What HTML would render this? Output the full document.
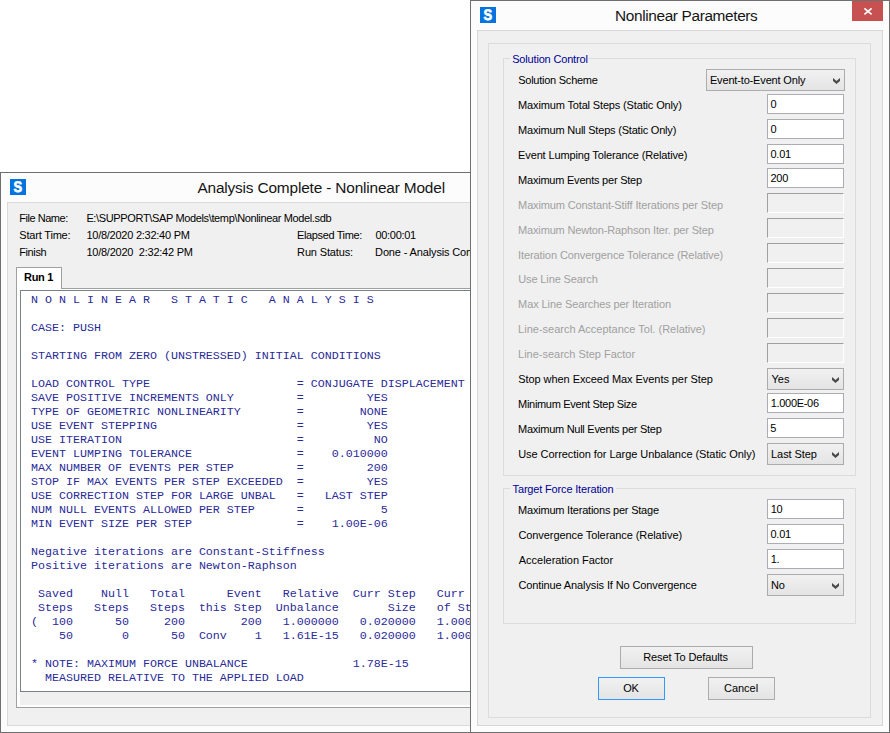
<!DOCTYPE html>
<html>
<head>
<meta charset="utf-8">
<title>Nonlinear Parameters</title>
<style>
html,body{margin:0;padding:0;}
body{width:890px;height:733px;overflow:hidden;background:#fff;position:relative;
  font-family:"Liberation Sans",sans-serif;font-size:11px;color:#000;}
.abs{position:absolute;}
.win{position:absolute;box-sizing:border-box;border:1px solid #6f6f6f;background:#fcfcfc;}
.icon{position:absolute;width:16px;height:16px;background:#0573e0;overflow:hidden;}
.t{position:absolute;white-space:pre;line-height:14px;height:14px;}
.title{font-size:15.4px;line-height:20px;height:20px;color:#151515;}
.dis{color:#a0a0a0;}
.leg{color:#000094;}
.inp{position:absolute;box-sizing:border-box;left:767px;width:77px;height:20px;border:1px solid #abadb3;background:#fff;}
.inpd{position:absolute;box-sizing:border-box;left:767px;width:77px;height:20px;border:1px solid;border-color:#a0a0a0 #fff #fff #a0a0a0;background:#f0f0f0;}
.sel{position:absolute;box-sizing:border-box;left:767px;width:77px;height:22px;border:1px solid #acacac;background:linear-gradient(#f1f1f1,#e4e4e4);}
.sel svg{position:absolute;right:4px;top:8px;}
.btn{position:absolute;box-sizing:border-box;height:23px;border:1px solid #acacac;background:linear-gradient(#f1f1f1,#e4e4e4);}
.grp{position:absolute;box-sizing:border-box;border:1px solid #dcdcdc;}
.gap{position:absolute;top:-1px;height:1px;background:#f0f0f0;}
.mono{position:absolute;margin:0;left:31px;top:293px;width:439px;overflow:hidden;font-family:"Liberation Mono","DejaVu Sans Mono",monospace;font-size:11.667px;line-height:14px;color:#2a2a98;white-space:pre;}
</style>
</head>
<body>

<!-- ================= LEFT WINDOW ================= -->
<div class="win" style="left:0;top:172px;width:500px;height:561px;">
  <div class="icon" style="left:9px;top:6px;"><svg width="16" height="16" style="position:absolute;left:0;top:0"><text x="0" y="0" text-rendering="geometricPrecision" transform="translate(7.8 13.2) scale(0.81 0.96)" text-anchor="middle" font-family="Liberation Sans,sans-serif" font-weight="bold" font-size="16" fill="#fff" stroke="#fff" stroke-width="0.7">S</text></svg></div>
  <div class="abs" style="left:6px;top:29px;width:500px;height:524px;background:#f0f0f0;box-sizing:border-box;border:1px solid #dadada;"></div>
</div>
<!-- tab page -->
<div class="abs" style="left:16px;top:288px;width:480px;height:420px;box-sizing:border-box;border:1px solid #a0a0a0;background:#fff;"></div>
<!-- tab -->
<div class="abs" style="left:16px;top:267px;width:46px;height:22px;box-sizing:border-box;border:1px solid #a0a0a0;border-bottom:none;background:#fff;"></div>
<!-- grey strip under textbox -->
<div class="abs" style="left:20px;top:692px;width:480px;height:13px;background:#f0f0f0;"></div>
<!-- text box -->
<div class="abs" style="left:20px;top:290px;width:480px;height:402px;box-sizing:border-box;border:1px solid #7a7f8c;background:#fff;"></div>
<pre class="mono">N O N L I N E A R   S T A T I C   A N A L Y S I S

CASE: PUSH

STARTING FROM ZERO (UNSTRESSED) INITIAL CONDITIONS

LOAD CONTROL TYPE                     = CONJUGATE DISPLACEMENT
SAVE POSITIVE INCREMENTS ONLY         =         YES
TYPE OF GEOMETRIC NONLINEARITY        =        NONE
USE EVENT STEPPING                    =         YES
USE ITERATION                         =          NO
EVENT LUMPING TOLERANCE               =    0.010000
MAX NUMBER OF EVENTS PER STEP         =         200
STOP IF MAX EVENTS PER STEP EXCEEDED  =         YES
USE CORRECTION STEP FOR LARGE UNBAL   =   LAST STEP
NUM NULL EVENTS ALLOWED PER STEP      =           5
MIN EVENT SIZE PER STEP               =    1.00E-06

Negative iterations are Constant-Stiffness
Positive iterations are Newton-Raphson

 Saved    Null   Total      Event   Relative  Curr Step   Curr Sum
 Steps   Steps   Steps  this Step  Unbalance       Size   of Steps
(  100      50     200        200   1.000000   0.020000   1.000000
    50       0      50  Conv    1   1.61E-15   0.020000   1.000000

* NOTE: MAXIMUM FORCE UNBALANCE               1.78E-15
  MEASURED RELATIVE TO THE APPLIED LOAD</pre>

<!-- ================= RIGHT DIALOG ================= -->
<div class="win" style="left:470px;top:0;width:420px;height:733px;">
  <div class="icon" style="left:9px;top:6px;"><svg width="16" height="16" style="position:absolute;left:0;top:0"><text x="0" y="0" text-rendering="geometricPrecision" transform="translate(7.8 13.2) scale(0.81 0.96)" text-anchor="middle" font-family="Liberation Sans,sans-serif" font-weight="bold" font-size="16" fill="#fff" stroke="#fff" stroke-width="0.7">S</text></svg></div>
  <div class="abs" style="left:381px;top:0;width:31px;height:20px;background:#c75050;">
    <svg width="31" height="20" style="position:absolute;left:0;top:0"><path d="M12.4 7.4 L19.6 13.4 M19.6 7.4 L12.4 13.4" stroke="#fff" stroke-width="1.7" fill="none"/></svg>
  </div>
  <div class="abs" style="left:6px;top:29px;width:406px;height:696px;background:#f0f0f0;box-sizing:border-box;border:1px solid #d6d6d6;"></div>
  <div class="abs" style="left:17px;top:42px;width:383px;height:675px;box-sizing:border-box;border:1px solid #dcdcdc;"></div>
</div>

<div class="grp" style="left:503px;top:58px;width:353px;height:418px;"><div class="gap" style="left:6px;width:79px;"></div></div>
<div class="grp" style="left:503px;top:488px;width:353px;height:136px;"><div class="gap" style="left:6px;width:106px;"></div></div>

<div class="sel" style="left:706px;top:69px;width:139px;"><svg width="7" height="6"><polygon points="0,0 3.5,3 7,0 7,3 3.5,6 0,3" fill="#4a4a4a"/></svg></div>
<div class="inp" style="top:94px;"></div>
<div class="inp" style="top:119px;"></div>
<div class="inp" style="top:144px;"></div>
<div class="inp" style="top:168px;"></div>
<div class="inpd" style="top:193px;"></div>
<div class="inpd" style="top:218px;"></div>
<div class="inpd" style="top:243px;"></div>
<div class="inpd" style="top:268px;"></div>
<div class="inpd" style="top:293px;"></div>
<div class="inpd" style="top:318px;"></div>
<div class="inpd" style="top:343px;"></div>
<div class="sel" style="top:368px;"><svg width="7" height="6"><polygon points="0,0 3.5,3 7,0 7,3 3.5,6 0,3" fill="#4a4a4a"/></svg></div>
<div class="inp" style="top:393px;"></div>
<div class="inp" style="top:418px;"></div>
<div class="sel" style="top:443px;"><svg width="7" height="6"><polygon points="0,0 3.5,3 7,0 7,3 3.5,6 0,3" fill="#4a4a4a"/></svg></div>
<div class="inp" style="top:499px;"></div>
<div class="inp" style="top:524px;"></div>
<div class="inp" style="top:549px;"></div>
<div class="sel" style="top:574px;"><svg width="7" height="6"><polygon points="0,0 3.5,3 7,0 7,3 3.5,6 0,3" fill="#4a4a4a"/></svg></div>

<div class="btn" style="left:620px;top:646px;width:133px;"></div>
<div class="btn" style="left:598px;top:677px;width:67px;border-color:#3399ff;"></div>
<div class="btn" style="left:708px;top:677px;width:67px;"></div>

<div class="t" style="left:518.2px;top:73px;letter-spacing:-0.246px;">Solution Scheme</div>
<div class="t" style="left:518.1px;top:98px;letter-spacing:-0.150px;">Maximum Total Steps (Static Only)</div>
<div class="t" style="left:518.1px;top:123px;letter-spacing:-0.200px;">Maximum Null Steps (Static Only)</div>
<div class="t" style="left:518.1px;top:148px;letter-spacing:-0.141px;">Event Lumping Tolerance (Relative)</div>
<div class="t" style="left:518.1px;top:173px;letter-spacing:-0.226px;">Maximum Events per Step</div>
<div class="t dis" style="left:518.1px;top:198px;letter-spacing:-0.127px;">Maximum Constant-Stiff Iterations per Step</div>
<div class="t dis" style="left:518.1px;top:223px;letter-spacing:-0.168px;">Maximum Newton-Raphson Iter. per Step</div>
<div class="t dis" style="left:518.0px;top:248px;letter-spacing:-0.091px;">Iteration Convergence Tolerance (Relative)</div>
<div class="t dis" style="left:518.2px;top:272px;letter-spacing:-0.121px;">Use Line Search</div>
<div class="t dis" style="left:518.1px;top:297px;letter-spacing:-0.099px;">Max Line Searches per Iteration</div>
<div class="t dis" style="left:518.1px;top:322px;letter-spacing:-0.002px;">Line-search Acceptance Tol. (Relative)</div>
<div class="t dis" style="left:518.1px;top:347px;letter-spacing:-0.020px;">Line-search Step Factor</div>
<div class="t" style="left:518.2px;top:372px;letter-spacing:-0.060px;">Stop when Exceed Max Events per Step</div>
<div class="t" style="left:518.1px;top:397px;letter-spacing:-0.312px;">Minimum Event Step Size</div>
<div class="t" style="left:518.1px;top:422px;letter-spacing:-0.270px;">Maximum Null Events per Step</div>
<div class="t" style="left:518.2px;top:447px;letter-spacing:-0.054px;">Use Correction for Large Unbalance (Static Only)</div>
<div class="t" style="left:518.1px;top:503px;letter-spacing:-0.215px;">Maximum Iterations per Stage</div>
<div class="t" style="left:518.4px;top:528px;letter-spacing:-0.077px;">Convergence Tolerance (Relative)</div>
<div class="t" style="left:518.8px;top:553px;letter-spacing:-0.028px;">Acceleration Factor</div>
<div class="t" style="left:518.4px;top:578px;letter-spacing:-0.111px;">Continue Analysis If No Convergence</div>
<div class="t leg" style="left:512.2px;top:52px;letter-spacing:-0.173px;">Solution Control</div>
<div class="t leg" style="left:512.6px;top:482px;letter-spacing:-0.167px;">Target Force Iteration</div>
<div class="t" style="left:19.2px;top:211px;letter-spacing:-0.451px;">File Name:</div>
<div class="t" style="left:86.4px;top:211px;letter-spacing:-0.357px;">E:\SUPPORT\SAP Models\temp\Nonlinear Model.sdb</div>
<div class="t" style="left:19.3px;top:228px;letter-spacing:-0.187px;">Start Time:</div>
<div class="t" style="left:86.4px;top:228px;letter-spacing:-0.250px;">10/8/2020 2:32:40 PM</div>
<div class="t" style="left:297.1px;top:228px;letter-spacing:-0.380px;">Elapsed Time:</div>
<div class="t" style="left:375.5px;top:228px;letter-spacing:-0.314px;">00:00:01</div>
<div class="t" style="left:19.2px;top:245px;letter-spacing:-0.371px;">Finish</div>
<div class="t" style="left:86.4px;top:245px;letter-spacing:-0.238px;">10/8/2020  2:32:42 PM</div>
<div class="t" style="left:297.1px;top:245px;letter-spacing:-0.148px;">Run Status:</div>
<div class="t" style="left:24.1px;top:270px;letter-spacing:-0.316px;font-weight:bold;">Run 1</div>
<div class="t" style="left:709.9px;top:73px;letter-spacing:-0.156px;">Event-to-Event Only</div>
<div class="t" style="left:770.5px;top:97px;letter-spacing:0.000px;">0</div>
<div class="t" style="left:770.5px;top:122px;letter-spacing:0.000px;">0</div>
<div class="t" style="left:770.5px;top:147px;letter-spacing:-0.250px;">0.01</div>
<div class="t" style="left:770.4px;top:171px;letter-spacing:-0.250px;">200</div>
<div class="t" style="left:771.4px;top:372px;letter-spacing:0.100px;">Yes</div>
<div class="t" style="left:770.7px;top:396px;letter-spacing:-0.304px;">1.000E-06</div>
<div class="t" style="left:770.3px;top:421px;letter-spacing:0.000px;">5</div>
<div class="t" style="left:771.1px;top:447px;letter-spacing:-0.093px;">Last Step</div>
<div class="t" style="left:770.7px;top:502px;letter-spacing:-0.250px;">10</div>
<div class="t" style="left:770.5px;top:527px;letter-spacing:-0.250px;">0.01</div>
<div class="t" style="left:770.7px;top:552px;letter-spacing:-0.250px;">1.</div>
<div class="t" style="left:771.1px;top:578px;letter-spacing:-0.250px;">No</div>
<div class="t title" style="left:197.4px;top:177.7px;letter-spacing:-0.162px;font-size:15.4px;">Analysis Complete - Nonlinear Model</div>
<div class="t title" style="left:615.0px;top:5.7px;letter-spacing:-0.362px;font-size:15.4px;">Nonlinear Parameters</div>
<div class="t" style="left:643.2px;top:650px;letter-spacing:-0.117px;">Reset To Defaults</div>
<div class="t" style="left:623.3px;top:681px;letter-spacing:-0.250px;">OK</div>
<div class="t" style="left:724.0px;top:681px;letter-spacing:-0.027px;">Cancel</div>
<div class="t" style="left:375.1px;top:245px;width:94.9px;overflow:hidden;letter-spacing:-0.141px;">Done - Analysis Complete</div>

</body>
</html>
